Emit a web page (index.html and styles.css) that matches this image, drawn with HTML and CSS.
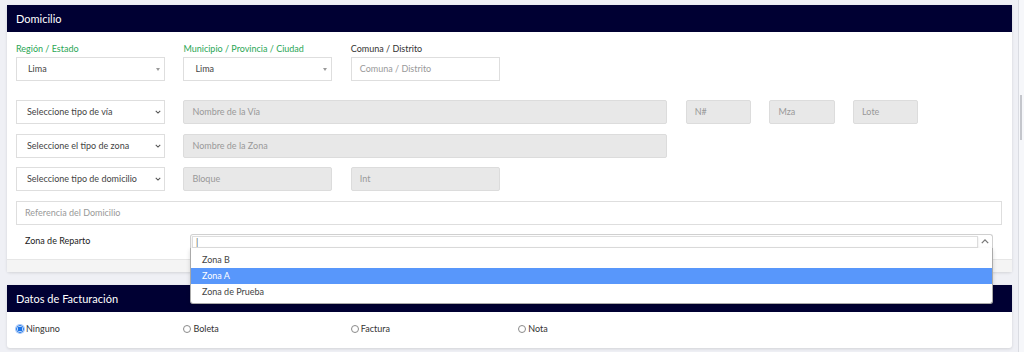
FILE: index.html
```html
<!DOCTYPE html>
<html lang="es">
<head>
<meta charset="utf-8">
<title>Domicilio</title>
<link rel="stylesheet" href="styles.css">
</head>
<body>
<div class="page">
  <section class="card">
    <header class="card-header">Domicilio</header>
    <div class="card-body">
      <div class="grid">
        <div class="field span2">
          <label class="lbl green">Región / Estado</label>
          <div class="ctrl sel2">Lima<span class="tri"></span></div>
        </div>
        <div class="field span2">
          <label class="lbl green">Municipio / Provincia / Ciudad</label>
          <div class="ctrl sel2">Lima<span class="tri"></span></div>
        </div>
        <div class="field span2">
          <label class="lbl">Comuna / Distrito</label>
          <div class="ctrl input ph">Comuna / Distrito</div>
        </div>
      </div>

      <div class="grid rows">
        <div class="ctrl native span2">Seleccione tipo de vía<svg class="chev" viewBox="0 0 8 5"><path d="M1 1l3 3 3-3" fill="none" stroke="#555" stroke-width="1.4"/></svg></div>
        <div class="ctrl input dis span6">Nombre de la Vía</div>
        <div class="ctrl input dis span1">N#</div>
        <div class="ctrl input dis span1">Mza</div>
        <div class="ctrl input dis span1">Lote</div>
        <div class="span1"></div>

        <div class="ctrl native span2">Seleccione el tipo de zona<svg class="chev" viewBox="0 0 8 5"><path d="M1 1l3 3 3-3" fill="none" stroke="#555" stroke-width="1.4"/></svg></div>
        <div class="ctrl input dis span6">Nombre de la Zona</div>
        <div class="span4"></div>

        <div class="ctrl native span2">Seleccione tipo de domicilio<svg class="chev" viewBox="0 0 8 5"><path d="M1 1l3 3 3-3" fill="none" stroke="#555" stroke-width="1.4"/></svg></div>
        <div class="ctrl input dis span2">Bloque</div>
        <div class="ctrl input dis span2">Int</div>
        <div class="span6"></div>

        <div class="ctrl input ph span12">Referencia del Domicilio</div>
      </div>

      <div class="zona-row">
        <div class="zona-label">Zona de Reparto</div>
        <div class="s2">
          <div class="s2-selection">
            <div class="s2-search"><span class="caret">|</span></div>
            <svg class="s2-arrow" viewBox="0 0 10 6"><path d="M1 5l4-4 4 4" fill="none" stroke="#777" stroke-width="1.6"/></svg>
          </div>
          <ul class="s2-dropdown">
            <li>Zona B</li>
            <li class="hl">Zona A</li>
            <li>Zona de Prueba</li>
          </ul>
        </div>
      </div>
    </div>
    <div class="card-footer"></div>
  </section>

  <section class="card card2">
    <header class="card-header">Datos de Facturación</header>
    <div class="card-body radios">
      <div class="grid">
        <div class="radio span2"><span class="dot on"></span>Ninguno</div>
        <div class="radio span2"><span class="dot"></span>Boleta</div>
        <div class="radio span2"><span class="dot"></span>Factura</div>
        <div class="radio span2"><span class="dot"></span>Nota</div>
      </div>
    </div>
  </section>
</div>
<div class="scrollbar"><div class="thumb"></div></div>
</body>
</html>
```

FILE: styles.css
```css
* { box-sizing: border-box; }
html, body { margin: 0; padding: 0; }
body {
  background: #eff0f5;
  font-family: Lato, "Open Sans", sans-serif;
  color: #444;
  width: 1024px;
  height: 352px;
  overflow: hidden;
}
.page { padding: 5px 12px 0 7px; }

.card {
  background: #fff;
  box-shadow: 0 1px 3px rgba(0,0,0,0.12);
  border-radius: 0 0 3px 3px;
}
.card2 { margin-top: 13px; }
.card-header {
  height: 27px;
  line-height: 27px;
  background: #000033;
  color: #fff;
  font-size: 11px;
  padding-left: 9px;
}
.card-body { padding: 10px 10px 11px 9px; }
.card-footer {
  height: 13px;
  background: #f4f4f4;
  border-top: 1px solid #e6e6e6;
}

.grid {
  display: grid;
  grid-template-columns: repeat(12, 1fr);
  column-gap: 18.5px;
}
.rows { margin-top: 19px; row-gap: 9.5px; }
.span1 { grid-column: span 1; }
.span2 { grid-column: span 2; }
.span3 { grid-column: span 3; }
.span4 { grid-column: span 4; }
.span6 { grid-column: span 6; }
.span12 { grid-column: span 12; }

.field { display: flex; flex-direction: column; }
.lbl {
  font-size: 9px;
  line-height: 12px;
  height: 12px;
  margin-top: 1px;
  margin-bottom: 2px;
  color: #333;
}
.lbl.green { color: #2aa655; }

.ctrl {
  height: 24px;
  border: 1px solid #dedede;
  background: #fff;
  font-size: 9px;
  line-height: 22px;
  white-space: nowrap;
  position: relative;
}
.sel2 { padding-left: 11px; color: #444; }
.tri {
  position: absolute;
  right: 4px;
  top: 10px;
  border-left: 2.5px solid transparent;
  border-right: 2.5px solid transparent;
  border-top: 3px solid #999;
}
.native { padding-left: 10px; color: #444; }
.chev { position: absolute; right: 3px; top: 9px; width: 6px; height: 4px; }
.input { padding-left: 8px; }
.ph { color: #999; }
.dis {
  background: #e8e8e8;
  color: #999;
  border-color: #dcdcdc;
  border-radius: 2px;
}

.zona-row {
  display: flex;
  align-items: flex-start;
  margin-top: 9.5px;
  padding-right: 9.5px;
}
.zona-label {
  width: 174px;
  padding-left: 9px;
  font-size: 9px;
  line-height: 14px;
  color: #222;
}
.s2 { flex: 1; position: relative; }
.s2-selection {
  height: 14px;
  border: 1px solid #d0d0d0;
  border-bottom: none;
  border-radius: 3px 3px 0 0;
  position: relative;
  padding: 1px 14px 0 1px;
}
.s2-search {
  height: 12px;
  border: 1px solid #ddd;
  box-shadow: 0 1px 2px rgba(0,0,0,0.12);
  font-size: 9px;
  line-height: 10px;
  padding-left: 3px;
  color: #555;
}
.s2-arrow { position: absolute; right: 3px; top: 4px; width: 8px; height: 5px; }
.s2-dropdown {
  position: absolute;
  left: 0;
  right: 0;
  top: 14px;
  margin: 0;
  padding: 4px 0 3px;
  list-style: none;
  background: #fff;
  border: 1px solid #aaa;
  border-top: none;
  border-radius: 0 0 3px 3px;
  box-shadow: 0 2px 4px rgba(0,0,0,0.15);
  z-index: 5;
}
.s2-dropdown li {
  height: 16px;
  line-height: 16px;
  padding-left: 11px;
  font-size: 9px;
  color: #444;
}
.s2-dropdown li.hl { background: #5897fb; color: #fff; }

.radios { padding: 11px 10px 13px 9px; }
.radio {
  display: flex;
  align-items: center;
  font-size: 9px;
  line-height: 12px;
  color: #333;
}
.dot {
  width: 8px;
  height: 8px;
  border-radius: 50%;
  border: 1px solid #8a8a8a;
  margin-right: 2px;
  background: #fff;
}
.dot.on {
  border-color: #1a73e8;
  background: radial-gradient(circle, #1a73e8 0 2.3px, #fff 2.6px);
  box-shadow: 0 0 0 1px #a8c8f8;
}

.scrollbar {
  position: fixed;
  top: 0;
  right: 0;
  width: 6px;
  height: 352px;
  border-left: 1px solid #dadce2;
  background: #f6f7fa;
}
.thumb {
  margin-top: 95px;
  margin-left: 1px;
  width: 2px;
  height: 45px;
  background: #c4c6cc;
}
```
